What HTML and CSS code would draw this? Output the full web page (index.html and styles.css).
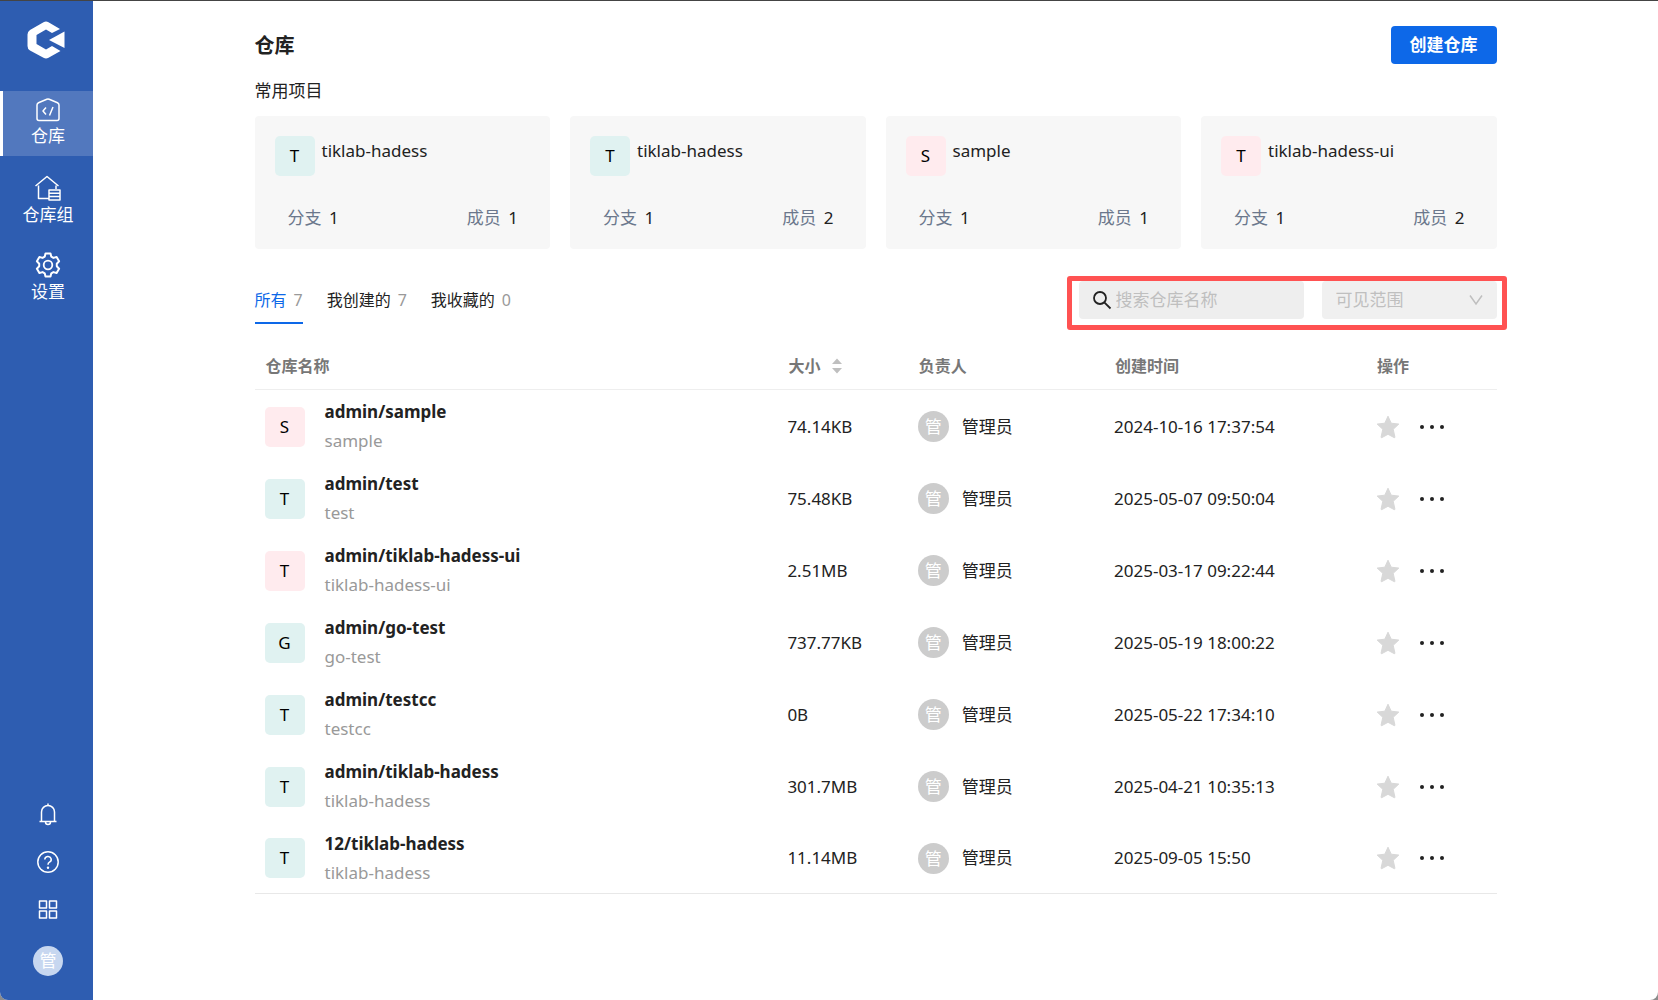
FILE: index.html
```
<!DOCTYPE html>
<html lang="zh-CN">
    <head>
        <meta charset="UTF-8">
        <meta name="viewport" content="width=device-width, initial-scale=1.0">
        <title>仓库</title>
        <link rel="stylesheet" href="styles.css">
    </head>

    <body>
        <!-- shared icons -->
        <svg class="sprite" aria-hidden="true">
            <symbol id="icon-star" viewBox="0 0 24 24">
                <path d="M12 1.2l3.2 7 7.6.9-5.6 5.2 1.7 7.7c.1.6-.3.9-.8.6L12 19.3l-6.1 3.3c-.5.3-.9 0-.8-.6l1.7-7.7L1.2 9.1l7.600-.9z" fill="#d8d8d8" stroke="#d8d8d8" stroke-linejoin="round"/>
            </symbol>
            <symbol id="icon-more" viewBox="0 0 24 24">
                <circle cx="2" cy="12" r="2" fill="#222"/>
                <circle cx="12" cy="12" r="2" fill="#222"/>
                <circle cx="22" cy="12" r="2" fill="#222"/>
            </symbol>
        </svg>

        <div class="layout">
            <aside class="sidebar">
                <a class="logo" href="#" aria-label="首页">
                    <svg width="38" height="38" viewBox="0 0 38 38">
                        <path d="M33 8L21.500 1.200Q19 -.2 16.500 1.200L3 9Q.5 10.500 .5 13.500V25Q.5 28 3 29.500L16.500 36.800Q19 38.200 21.500 36.800L33.500 30L25 25L19 28.500L9.500 23V14L19 8.500L25 12z" fill="#fff"/>
                        <path d="M22 19L37.500 10.500V27z" fill="#fff"/>
                    </svg>
                </a>

                <nav class="menu">
                    <a class="menu-item active" href="#">
                        <svg width="24" height="24" viewBox="0 0 24 24">
                            <path d="M1 7Q1 5.500 2.500 4.800L10.800 1.300Q12 .8 13.200 1.300L21.500 4.800Q23 5.500 23 7V20.500Q23 22.500 21 22.500H3Q1 22.500 1 20.500z"/>
                            <path d="M10 9.500L7 13L10 16.500M17 9L13.500 17.500"/>
                        </svg>
                        <span>仓库</span>
                    </a>
                    <a class="menu-item" href="#">
                        <svg width="26" height="26" viewBox="0 0 26 26">
                            <path d="M.5 11L12 1.500L23.500 11M3.500 10.500V23.500H14M21 10.500V14"/>
                            <path d="M14 15H25V25H14zM14 18.300H25M14 21.600H25"/>
                        </svg>
                        <span>仓库组</span>
                    </a>
                    <a class="menu-item" href="#">
                        <svg width="26" height="26" viewBox="0 0 26 26">
                            <path d="M10.500 1.500H15.500L16.300 4.700L18.400 5.900L21.600 5L24.100 9.300L21.800 11.700V14.300L24.100 16.700L21.600 21L18.400 20.100L16.300 21.300L15.500 24.500H10.500L9.700 21.300L7.600 20.100L4.400 21L1.900 16.700L4.200 14.300V11.700L1.900 9.300L4.400 5L7.600 5.900L9.700 4.700z" stroke-width="2"/>
                            <circle cx="13" cy="13" r="4.300" stroke-width="1.800"/>
                        </svg>
                        <span>设置</span>
                    </a>
                </nav>

                <div class="tools">
                    <button type="button" aria-label="消息">
                        <svg width="24" height="24" viewBox="0 0 24 24">
                            <path d="M3.500 19.500H20.500M5.500 19.500V10a6.500 6.500 0 0 1 13 0V19.500M12 1.500V3.500M9.500 20a2.500 2.500 0 0 0 5 0"/>
                        </svg>
                    </button>
                    <button type="button" aria-label="帮助">
                        <svg width="24" height="24" viewBox="0 0 24 24">
                            <circle cx="12" cy="12" r="10.200"/>
                            <path d="M8.800 9.500a3.200 3 0 1 1 4.700 2.700Q12 13 12 14.800"/>
                            <circle class="dot" cx="12" cy="17.800" r="1.200"/>
                        </svg>
                    </button>
                    <button type="button" aria-label="应用">
                        <svg width="24" height="24" viewBox="0 0 24 24">
                            <path d="M3.500 3H10.500V10H3.500zM13.500 3H20.500V10H13.500zM3.500 13H10.500V20H3.500zM13.500 13H20.500V20H13.500z"/>
                        </svg>
                    </button>
                    <button class="user" type="button">管</button>
                </div>
            </aside>

            <main class="main">
                <div class="content">
                    <header class="page-head">
                        <h1>仓库</h1>
                        <button class="create" type="button">创建仓库</button>
                    </header>

                    <h2>常用项目</h2>
                    <div class="cards">
                        <section class="card">
                            <div class="card-head">
                                <span class="avatar green">T</span>
                                <a href="#">tiklab-hadess</a>
                            </div>
                            <div class="card-info">
                                <span>分支 <b>1</b></span>
                                <span>成员 <b>1</b></span>
                            </div>
                        </section>
                        <section class="card">
                            <div class="card-head">
                                <span class="avatar green">T</span>
                                <a href="#">tiklab-hadess</a>
                            </div>
                            <div class="card-info">
                                <span>分支 <b>1</b></span>
                                <span>成员 <b>2</b></span>
                            </div>
                        </section>
                        <section class="card">
                            <div class="card-head">
                                <span class="avatar pink">S</span>
                                <a href="#">sample</a>
                            </div>
                            <div class="card-info">
                                <span>分支 <b>1</b></span>
                                <span>成员 <b>1</b></span>
                            </div>
                        </section>
                        <section class="card">
                            <div class="card-head">
                                <span class="avatar pink">T</span>
                                <a href="#">tiklab-hadess-ui</a>
                            </div>
                            <div class="card-info">
                                <span>分支 <b>1</b></span>
                                <span>成员 <b>2</b></span>
                            </div>
                        </section>
                    </div>

                    <div class="toolbar">
                        <div class="tabs">
                            <button class="tab active" type="button">所有<span>7</span></button>
                            <button class="tab" type="button">我创建的<span>7</span></button>
                            <button class="tab" type="button">我收藏的<span>0</span></button>
                        </div>
                        <div class="filters">
                            <label class="search">
                                <svg width="20" height="20" viewBox="0 0 20 20">
                                    <circle cx="8" cy="8" r="6"/>
                                    <path d="M12.300 12.300L18.500 18.500"/>
                                </svg>
                                <input type="text" placeholder="搜索仓库名称" aria-label="搜索仓库名称">
                            </label>
                            <div class="scope">
                                <select aria-label="可见范围">
                                    <option>可见范围</option>
                                </select>
                                <svg width="14" height="12" viewBox="0 0 14 12">
                                    <path d="M1 1.500L7 10L13 1.500"/>
                                </svg>
                            </div>
                        </div>
                    </div>

                    <table class="repos">
                        <colgroup>
                            <col class="col-name">
                            <col class="col-size">
                            <col class="col-owner">
                            <col class="col-time">
                            <col class="col-action">
                        </colgroup>
                        <thead>
                            <tr>
                                <th>仓库名称</th>
                                <th>
                                    <span class="sort">大小
                                        <svg width="10" height="16" viewBox="0 0 10 16">
                                            <path d="M5 0.500L10 6H0zM5 15.500L0 10H10z" fill="#bfbfbf"/>
                                        </svg>
                                    </span>
                                </th>
                                <th>负责人</th>
                                <th>创建时间</th>
                                <th>操作</th>
                            </tr>
                        </thead>
                        <tbody>
                            <tr>
                                <td><div class="repo"><span class="avatar pink">S</span><div><a href="#">admin/sample</a><p>sample</p></div></div></td>
                                <td>74.14KB</td>
                                <td><div class="owner"><span class="face">管</span>管理员</div></td>
                                <td>2024-10-16 17:37:54</td>
                                <td><div class="actions"><button type="button" aria-label="收藏"><svg width="24" height="24"><use href="#icon-star"/></svg></button><button type="button" aria-label="更多"><svg width="24" height="24"><use href="#icon-more"/></svg></button></div></td>
                            </tr>
                            <tr>
                                <td><div class="repo"><span class="avatar green">T</span><div><a href="#">admin/test</a><p>test</p></div></div></td>
                                <td>75.48KB</td>
                                <td><div class="owner"><span class="face">管</span>管理员</div></td>
                                <td>2025-05-07 09:50:04</td>
                                <td><div class="actions"><button type="button" aria-label="收藏"><svg width="24" height="24"><use href="#icon-star"/></svg></button><button type="button" aria-label="更多"><svg width="24" height="24"><use href="#icon-more"/></svg></button></div></td>
                            </tr>
                            <tr>
                                <td><div class="repo"><span class="avatar pink">T</span><div><a href="#">admin/tiklab-hadess-ui</a><p>tiklab-hadess-ui</p></div></div></td>
                                <td>2.51MB</td>
                                <td><div class="owner"><span class="face">管</span>管理员</div></td>
                                <td>2025-03-17 09:22:44</td>
                                <td><div class="actions"><button type="button" aria-label="收藏"><svg width="24" height="24"><use href="#icon-star"/></svg></button><button type="button" aria-label="更多"><svg width="24" height="24"><use href="#icon-more"/></svg></button></div></td>
                            </tr>
                            <tr>
                                <td><div class="repo"><span class="avatar green">G</span><div><a href="#">admin/go-test</a><p>go-test</p></div></div></td>
                                <td>737.77KB</td>
                                <td><div class="owner"><span class="face">管</span>管理员</div></td>
                                <td>2025-05-19 18:00:22</td>
                                <td><div class="actions"><button type="button" aria-label="收藏"><svg width="24" height="24"><use href="#icon-star"/></svg></button><button type="button" aria-label="更多"><svg width="24" height="24"><use href="#icon-more"/></svg></button></div></td>
                            </tr>
                            <tr>
                                <td><div class="repo"><span class="avatar green">T</span><div><a href="#">admin/testcc</a><p>testcc</p></div></div></td>
                                <td>0B</td>
                                <td><div class="owner"><span class="face">管</span>管理员</div></td>
                                <td>2025-05-22 17:34:10</td>
                                <td><div class="actions"><button type="button" aria-label="收藏"><svg width="24" height="24"><use href="#icon-star"/></svg></button><button type="button" aria-label="更多"><svg width="24" height="24"><use href="#icon-more"/></svg></button></div></td>
                            </tr>
                            <tr>
                                <td><div class="repo"><span class="avatar green">T</span><div><a href="#">admin/tiklab-hadess</a><p>tiklab-hadess</p></div></div></td>
                                <td>301.7MB</td>
                                <td><div class="owner"><span class="face">管</span>管理员</div></td>
                                <td>2025-04-21 10:35:13</td>
                                <td><div class="actions"><button type="button" aria-label="收藏"><svg width="24" height="24"><use href="#icon-star"/></svg></button><button type="button" aria-label="更多"><svg width="24" height="24"><use href="#icon-more"/></svg></button></div></td>
                            </tr>
                            <tr>
                                <td><div class="repo"><span class="avatar green">T</span><div><a href="#">12/tiklab-hadess</a><p>tiklab-hadess</p></div></div></td>
                                <td>11.14MB</td>
                                <td><div class="owner"><span class="face">管</span>管理员</div></td>
                                <td>2025-09-05 15:50</td>
                                <td><div class="actions"><button type="button" aria-label="收藏"><svg width="24" height="24"><use href="#icon-star"/></svg></button><button type="button" aria-label="更多"><svg width="24" height="24"><use href="#icon-more"/></svg></button></div></td>
                            </tr>
                        </tbody>
                    </table>
                </div>
            </main>
        </div>
    </body>
</html>
```
FILE: styles.css
```
*{
    box-sizing: border-box;
}

body{
    margin: 0;
    background: #8c8c8c;
    color: #222;
    font-family: "Noto Sans", "Noto Sans CJK SC", sans-serif;
    font-size: 17px;
    line-height: 24px;
}

button, input, select{
    font: inherit;
    color: inherit;
    border: none;
    background: none;
    padding: 0;
    margin: 0;
}

button{
    cursor: pointer;
}

a{
    color: inherit;
    text-decoration: none;
}

h1, h2, p{
    margin: 0;
}

svg{
    display: block;
    flex: none;
}

.sprite{
    position: absolute;
    width: 0;
    height: 0;
}

.layout{
    display: flex;
    min-height: 100vh;
    border-top: 1px solid #444;
    border-radius: 0 0 8px 8px;
    background: #fff;
    overflow: hidden;
}

/* sidebar */
.sidebar{
    flex: none;
    width: 93px;
    background: #2e5db1;
    color: #fff;
    display: flex;
    flex-direction: column;
}

.logo{
    display: flex;
    justify-content: center;
    padding: 20px 2px 32px 0;
}

.menu{
    display: flex;
    flex-direction: column;
    gap: 12px;
}

.menu-item{
    display: flex;
    flex-direction: column;
    align-items: center;
    height: 65px;
    padding-top: 7px;
    gap: 2px;
    border-left: 3px solid transparent;
}

.menu-item.active{
    background: #5278be;
    border-left-color: #fff;
}

.menu-item svg, .tools svg{
    fill: none;
    stroke: #fff;
    stroke-width: 1.5;
    stroke-linejoin: round;
}

.tools{
    margin-top: auto;
    padding: 0 0 24px 3px;
    display: flex;
    flex-direction: column;
    align-items: center;
    gap: 24px;
}

.tools .dot{
    fill: #fff;
    stroke: none;
}

.user{
    width: 30px;
    height: 30px;
    border-radius: 50%;
    background: #c7d7f0;
    line-height: 30px;
}

/* main */
.main{
    flex: 1;
    min-width: 0;
    padding: 25px 40px;
}

.content{
    max-width: 1242px;
    margin: 0 auto;
}

.page-head{
    display: flex;
    align-items: center;
    justify-content: space-between;
}

h1{
    padding-top: 2px;
    font-size: 20px;
    line-height: 28px;
}

h2{
    font-size: 17px;
    font-weight: normal;
    margin: 15px 0 13px;
}

.create{
    height: 38px;
    padding: 0 19px;
    border-radius: 4px;
    background: #0d68e8;
    color: #fff;
    font-weight: bold;
}

.avatar{
    flex: none;
    width: 40px;
    height: 40px;
    border-radius: 5px;
    line-height: 40px;
    text-align: center;
    color: #000;
}

.green{
    background: #e0f2f1;
}

.pink{
    background: #ffebee;
}

.cards{
    display: grid;
    grid-template-columns: repeat(4, 1fr);
    gap: 20px;
}

.card{
    height: 133px;
    padding: 20px;
    border-radius: 4px;
    background: #f7f7f7;
}

.card-head{
    display: flex;
    gap: 7px;
}

.card-head a{
    padding-top: 3px;
}

.card-info{
    display: flex;
    justify-content: space-between;
    padding: 30px 12px 0 13px;
    color: #6b778c;
}

.card-info b{
    margin-left: 3px;
    font-weight: normal;
    color: #222;
}

/* tabs and filters */
.toolbar{
    display: flex;
    justify-content: space-between;
    align-items: flex-start;
    margin-top: 32px;
}

.tabs{
    display: flex;
    gap: 24px;
}

.tab{
    height: 43px;
    font-size: 16px;
    line-height: 38px;
    padding-bottom: 3px;
    border-bottom: 2px solid transparent;
}

.tab span{
    margin-left: 7px;
    color: #999;
}

.tab.active{
    color: #0d68e8;
    border-bottom-color: #0d68e8;
}

.filters{
    position: relative;
    display: flex;
    gap: 18px;
}

/* red frame over the filters */
.filters::after{
    content: "";
    position: absolute;
    inset: -5px -10px -11px -12px;
    border: 5px solid #ff5252;
    border-radius: 3px;
    pointer-events: none;
}

.search{
    display: flex;
    align-items: center;
    gap: 4px;
    width: 225px;
    height: 38px;
    padding: 0 13px;
    border-radius: 4px;
    background: #eee;
}

.search svg{
    fill: none;
    stroke: #222;
    stroke-width: 1.8;
}

.search input{
    flex: 1;
    min-width: 0;
    outline: none;
}

.search input::placeholder{
    color: #bfbfbf;
    opacity: 1;
}

.scope{
    display: grid;
    align-items: center;
    width: 175px;
    height: 38px;
    border-radius: 4px;
    background: #f0f0f0;
}

.scope select, .scope svg{
    grid-area: 1 / 1;
}

.scope select{
    appearance: none;
    height: 38px;
    padding: 0 14px;
    color: #bfbfbf;
}

.scope svg{
    justify-self: end;
    margin-right: 14px;
    fill: none;
    stroke: #bfbfbf;
    stroke-width: 1.5;
    pointer-events: none;
}

/* table */
.repos{
    width: 100%;
    margin-top: 20px;
    table-layout: fixed;
    border-collapse: collapse;
}

.col-name{ width: 42.1%; }
.col-size{ width: 10.5%; }
.col-owner{ width: 15.8%; }
.col-time{ width: 21.1%; }
.col-action{ width: 10.5%; }

.repos th{
    height: 45px;
    padding: 0 0 0 11px;
    border-bottom: 1px solid #eee;
    text-align: left;
    font-size: 16px;
    color: #777;
}

.sort{
    display: flex;
    align-items: center;
    gap: 12px;
}

.repos td{
    height: 72px;
    padding: 3px 0 0 10px;
}

.repos tbody{
    border-bottom: 1px solid #e8e8e8;
}

.repo{
    display: flex;
    align-items: center;
    gap: 20px;
}

.repo a{
    display: block;
    font-weight: bold;
}

.repo p{
    margin-top: 5px;
    color: #999;
}

.owner{
    display: flex;
    align-items: center;
    gap: 13px;
}

.face{
    width: 31px;
    height: 31px;
    border-radius: 50%;
    background: #ccc;
    color: #fff;
    line-height: 31px;
    text-align: center;
}

.actions{
    display: flex;
    gap: 20px;
}
```
